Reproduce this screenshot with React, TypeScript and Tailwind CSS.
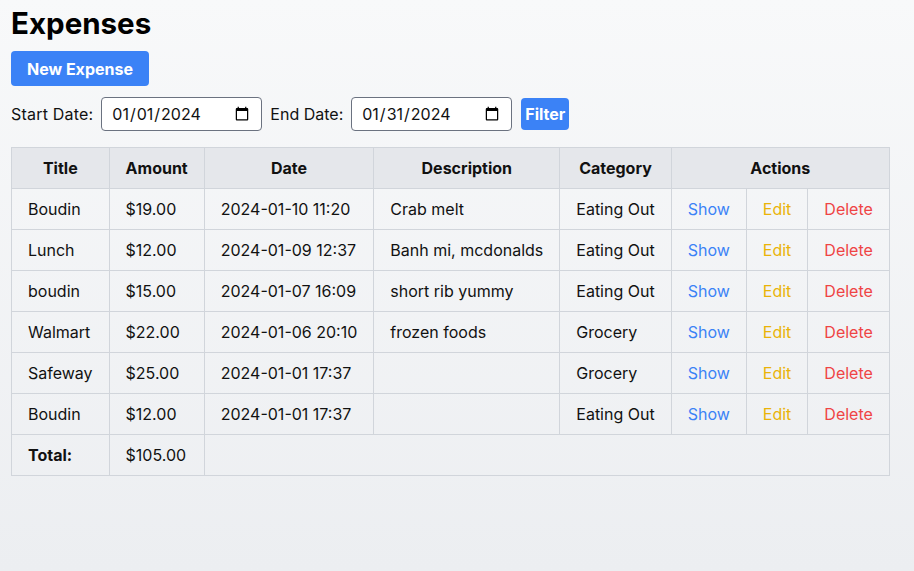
import { useState } from 'react'

type Expense = {
  title: string
  amount: number
  date: string
  description: string
  category: string
}

const expenses: Expense[] = [
  { title: 'Boudin', amount: 19, date: '2024-01-10 11:20', description: 'Crab melt', category: 'Eating Out' },
  { title: 'Lunch', amount: 12, date: '2024-01-09 12:37', description: 'Banh mi, mcdonalds', category: 'Eating Out' },
  { title: 'boudin', amount: 15, date: '2024-01-07 16:09', description: 'short rib yummy', category: 'Eating Out' },
  { title: 'Walmart', amount: 22, date: '2024-01-06 20:10', description: 'frozen foods', category: 'Grocery' },
  { title: 'Safeway', amount: 25, date: '2024-01-01 17:37', description: '', category: 'Grocery' },
  { title: 'Boudin', amount: 12, date: '2024-01-01 17:37', description: '', category: 'Eating Out' }
]

const money = (n: number) => `$${n.toFixed(2)}`

export default function App() {
  const [startDate, setStartDate] = useState('2024-01-01')
  const [endDate, setEndDate] = useState('2024-01-31')
  const total = expenses.reduce((sum, e) => sum + e.amount, 0)

  const cell = 'border border-[#d1d5db] px-4 py-2 text-left'
  const head = 'border border-[#d1d5db] px-4 py-2 text-center font-bold'

  return (
    <div
      className="min-h-screen bg-gradient-to-b from-[#f8f9fa] to-[#eceef1] px-[11px] pt-[3px] text-[16px] text-[#111]"
      style={{ fontFamily: 'Inter, "Noto Sans", sans-serif' }}
    >
      <h1 className="text-[29.5px] font-bold leading-[40px] text-black">Expenses</h1>

      <button
        type="button"
        className="mt-[8px] h-[35px] rounded bg-[#3b82f6] px-4 font-bold text-white"
      >
        New Expense
      </button>

      <div className="mt-[11px] flex items-center gap-2">
        <label htmlFor="start" className="tracking-[0.2px]">Start Date:</label>
        <input
          id="start"
          type="date"
          value={startDate}
          onChange={(e) => setStartDate(e.target.value)}
          className="h-[34px] w-[161px] rounded border border-[#6b7280] bg-white px-[9px]"
        />
        <label htmlFor="end">End Date:</label>
        <input
          id="end"
          type="date"
          value={endDate}
          onChange={(e) => setEndDate(e.target.value)}
          className="h-[34px] w-[161px] rounded border border-[#6b7280] bg-white px-[9px]"
        />
        <button type="button" className="ml-px h-[32px] rounded bg-[#3b82f6] px-1 font-bold text-white">
          Filter
        </button>
      </div>

      <table className="mt-4 border-collapse">
        <thead>
          <tr className="bg-[#e5e7eb]">
            <th className={head}>Title</th>
            <th className={head}>Amount</th>
            <th className={head}>Date</th>
            <th className={head}>Description</th>
            <th className={head}>Category</th>
            <th className={head} colSpan={3}>
              Actions
            </th>
          </tr>
        </thead>
        <tbody>
          {expenses.map((e, i) => (
            <tr key={i}>
              <td className={cell}>{e.title}</td>
              <td className={cell}>{money(e.amount)}</td>
              <td className={cell}>{e.date}</td>
              <td className={cell}>{e.description}</td>
              <td className={cell}>{e.category}</td>
              <td className={cell}>
                <a href="#" className="text-[#3b82f6]">Show</a>
              </td>
              <td className={cell}>
                <a href="#" className="text-[#eab308]">Edit</a>
              </td>
              <td className={cell}>
                <a href="#" className="text-[#ef4444]">Delete</a>
              </td>
            </tr>
          ))}
          <tr>
            <td className={`${cell} font-bold`}>Total:</td>
            <td className={cell}>{money(total)}</td>
            <td className={cell} colSpan={6}></td>
          </tr>
        </tbody>
      </table>
    </div>
  )
}
